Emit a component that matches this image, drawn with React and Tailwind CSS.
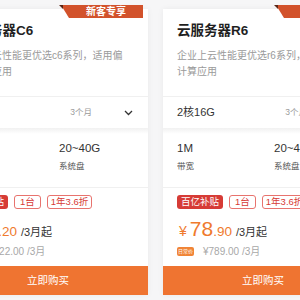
import React from "react";

const FONT = {
  fontFamily: '"Liberation Sans", "Noto Sans CJK SC", sans-serif',
};

const CARDS = [
  {
    name: "云服务器C6",
    desc: ["企业上云性能更优选c6系列，适用偏", "通用型应用"],
    spec: "2核4G",
    bandwidth: "1M",
    disk: "20~40G",
    price: "52",
    cents: ".20",
    daily: "¥522.00",
  },
  {
    name: "云服务器R6",
    desc: ["企业上云性能更优选r6系列，适用偏", "计算应用"],
    spec: "2核16G",
    bandwidth: "1M",
    disk: "20~40G",
    price: "78",
    cents: ".90",
    daily: "¥789.00",
  },
];

// ── Corner ribbon ─────────────────────────────────────────────────────────────
const Ribbon = () => (
  <div className="absolute top-[-4px] left-[111px] w-[84px] h-[13px]">
    <svg width="84" height="13" viewBox="0 0 84 13" className="absolute inset-0">
      <polygon points="2,0 84,0 84,13 10,13" fill="#d2522b" />
      <polygon points="0,0 4,0 4,4" fill="#5b2616" />
    </svg>
    <span className="absolute left-[10px] right-0 top-0 h-[13px] flex items-center justify-center text-white text-[10px] font-bold leading-none">
      新客专享
    </span>
  </div>
);

const Chevron = () => (
  <svg width="9" height="6" viewBox="0 0 9 6" fill="none">
    <path d="M1 1l3.5 3.5L8 1" stroke="#333" strokeWidth="1.3" />
  </svg>
);

const Card = ({ c }) => (
  <div className="relative w-[200px] h-[286px] shrink-0 bg-white flex flex-col shadow-[0_0_6px_rgba(0,0,0,0.06)]">
    <Ribbon />

    {/* Title + description */}
    <div className="px-[14px] pt-[12px]">
      <p className="text-[13.5px] font-bold leading-[20px] text-[#1f1f1f]">{c.name}</p>
      <div className="mt-[7px] text-[10px] leading-[16px] text-[#9a9a9a] whitespace-nowrap">
        <div>{c.desc[0]}</div>
        <div>{c.desc[1]}</div>
      </div>
    </div>

    {/* Spec select */}
    <div className="mt-[16px] h-[32px] border-t border-[#f0f0f0] flex items-center pl-[14px] pr-[15px]">
      <span className="text-[11px] text-[#333]">{c.spec}</span>
      <span className="ml-auto text-[8.5px] text-[#9a9a9a]">3个月</span>
      <span className="ml-[32px] flex items-center">
        <Chevron />
      </span>
    </div>
    <div className="h-[6px] bg-gradient-to-b from-[#f1f1f1] to-white" />

    {/* Bandwidth / disk */}
    <div className="grid grid-cols-[97px_1fr] px-[14px] pt-[6px] pb-[15px] border-b border-[#f0f0f0]">
      <div>
        <p className="text-[11.5px] leading-[16px] text-[#333]">{c.bandwidth}</p>
        <p className="mt-[4px] text-[8.5px] leading-[12px] text-[#555]">带宽</p>
      </div>
      <div>
        <p className="text-[11.5px] leading-[16px] text-[#333]">{c.disk}</p>
        <p className="mt-[4px] text-[8.5px] leading-[12px] text-[#555]">系统盘</p>
      </div>
    </div>

    {/* Tags */}
    <div className="mt-[7px] px-[14px] flex items-center gap-[6px]">
      <span className="h-[14px] px-[4px] rounded-[3px] bg-[#d63b36] text-white text-[9.5px] leading-none flex items-center">
        百亿补贴
      </span>
      <span className="h-[14px] px-[5px] rounded-[3px] border border-[#e8736e] text-[#d63b36] text-[9.5px] leading-none flex items-center">
        1台
      </span>
      <span className="h-[14px] px-[3px] rounded-[3px] border border-[#e8736e] text-[#d63b36] text-[9.5px] leading-none flex items-center">
        1年3.6折
      </span>
    </div>

    {/* Price */}
    <div className="mt-[8px] px-[14px] flex items-baseline h-[24px] leading-[24px]">
      <span className="text-[14px] text-[#ef7a2e] ml-[2px] mr-[3px]">¥</span>
      <span className="text-[21px] text-[#ef7a2e]">{c.price}</span>
      <span className="text-[13.5px] text-[#ef7a2e]">{c.cents}</span>
      <span className="ml-[4px] text-[11px] text-[#333]">/3月起</span>
    </div>
    <div className="mt-[4px] px-[14px] flex items-center h-[12px]">
      <span className="w-[17px] h-[9px] rounded-[2px] bg-[#f08436] text-white text-[5px] leading-none flex items-center justify-center">
        日常价
      </span>
      <span className="ml-[9px] text-[10px] text-[#a8a8a8]">{c.daily} /3月</span>
    </div>

    {/* Buy */}
    <button className="mt-auto h-[29px] w-full bg-[#ef7431] text-white text-[10.5px] flex items-center justify-center">
      立即购买
    </button>
  </div>
);

export default function App() {
  return (
    <div className="w-[300px] h-[300px] overflow-hidden bg-[#f6f6f7]" style={FONT}>
      <div className="flex gap-[15px] ml-[-52px] pt-[9px]">
        {CARDS.map((c) => (
          <Card key={c.name} c={c} />
        ))}
      </div>
    </div>
  );
}
